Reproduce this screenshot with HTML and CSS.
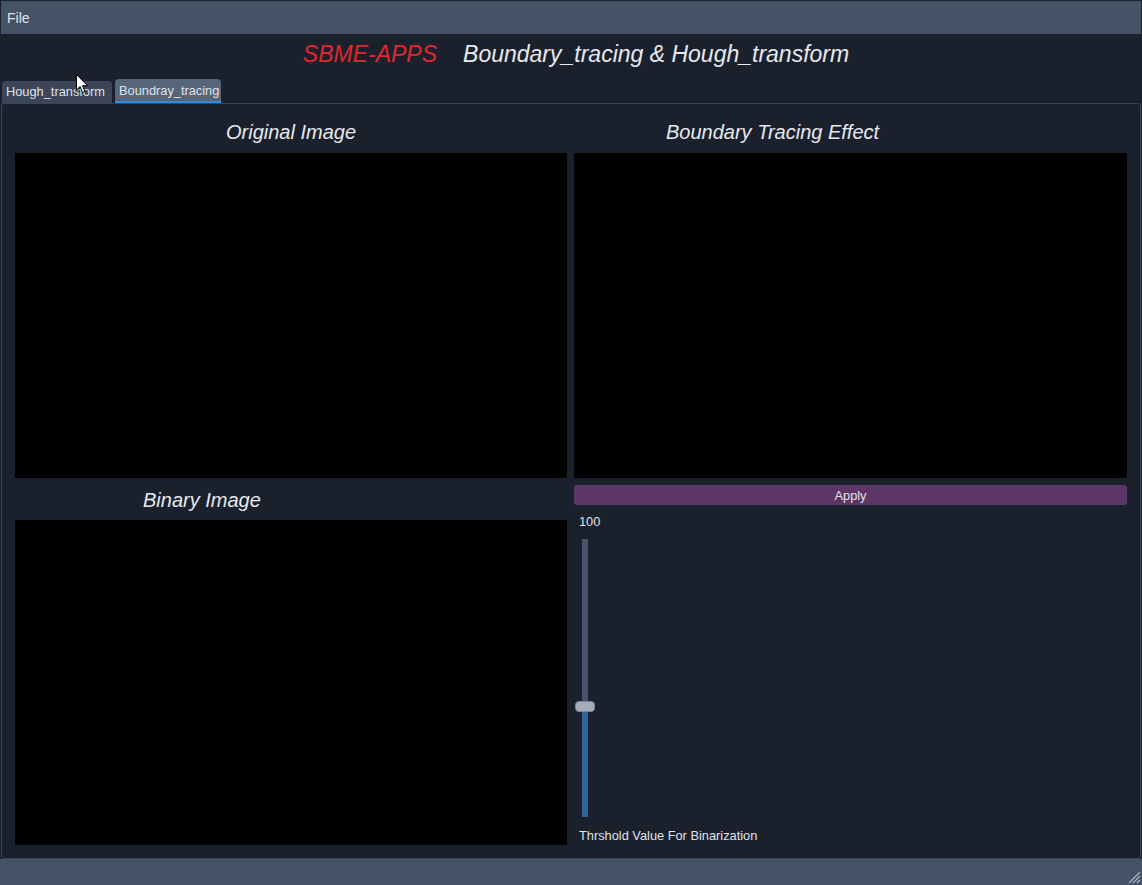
FILE: index.html
```html
<!DOCTYPE html>
<html>
<head>
<meta charset="utf-8">
<link rel="stylesheet" href="styles.css">
</head>
<body>
<div class="window">
  <div class="menubar"><span class="menu-item">File</span></div>
  <div class="title"><span class="brand">SBME-APPS</span><span class="subtitle">Boundary_tracing &amp; Hough_transform</span></div>
  <div class="tabs">
    <div class="tab">Hough_transform</div>
    <div class="tab active">Boundray_tracing</div>
  </div>
  <div class="panel">
    <div class="grid">
      <div class="label label-orig">Original Image</div>
      <div class="label label-effect">Boundary Tracing Effect</div>
      <div class="image"></div>
      <div class="image"></div>
      <div class="label label-binary">Binary Image</div>
      <div class="controls">
        <button class="apply">Apply</button>
        <div class="value">100</div>
        <div class="slider">
          <div class="track-top"></div>
          <div class="track-bottom"></div>
          <div class="handle"></div>
        </div>
        <div class="caption">Thrshold Value For Binarization</div>
      </div>
      <div class="image"></div>
    </div>
  </div>
  <div class="statusbar">
    <svg class="grip" width="14" height="14" viewBox="0 0 14 14">
      <path d="M13 2 L2 13 M13 6 L6 13 M13 10 L10 13" stroke="#a9b3c2" stroke-width="1.2" fill="none"/>
    </svg>
  </div>
  <svg class="cursor" width="13" height="20" viewBox="0 0 13 20">
    <path d="M0.5 0.5 L0.5 16 L4 12.5 L6.6 18.5 L9 17.5 L6.5 11.7 L11.5 11.7 Z" fill="#ffffff" stroke="#000000" stroke-width="1"/>
  </svg>
</div>
</body>
</html>
```
FILE: styles.css
```css
* { box-sizing: border-box; }
html, body { margin: 0; padding: 0; }
body {
  background: #1b212c;
  font-family: "Liberation Sans", Arial, sans-serif;
  color: #dfe3ea;
}
.window {
  position: relative;
  width: 1142px;
  height: 885px;
  display: flex;
  flex-direction: column;
  background: #1b212c;
}
.menubar {
  height: 33px;
  margin: 1px 1px 0 1px;
  background: #465366;
  display: flex;
  align-items: center;
  padding-left: 6px;
}
.menu-item {
  font-size: 14px;
  color: #dfe3ea;
}
.title {
  height: 44px;
  display: flex;
  justify-content: center;
  align-items: center;
  gap: 26px;
  font-style: italic;
  font-size: 23px;
  padding-left: 10px;
  padding-bottom: 4px;
}
.brand { color: #e0262e; }
.subtitle { color: #e6e9ef; }
.tabs {
  height: 25px;
  display: flex;
  align-items: flex-end;
  gap: 3px;
  padding-left: 2px;
}
.tab {
  height: 22px;
  width: 110px;
  background: #3c4658;
  border-radius: 4px 4px 0 0;
  font-size: 12.8px;
  color: #dfe3ea;
  display: flex;
  align-items: center;
  padding-left: 4px;
  padding-bottom: 1px;
}
.tab.active {
  height: 24px;
  width: 106px;
  background: #57657a;
  border-bottom: 2px solid #2b8ee0;
  padding-top: 1px;
  padding-bottom: 0;
}
.panel {
  flex: 1;
  margin: 0 1px;
  border: 1px solid #3b4759;
  border-radius: 3px;
  padding: 0 12px 0 13px;
}
.grid {
  display: grid;
  grid-template-columns: 552px 553px;
  grid-template-rows: 49px 325px 42px 325px;
  column-gap: 7px;
}
.label {
  font-style: italic;
  font-size: 20px;
  color: #e6e9ef;
  display: flex;
  align-items: center;
}
.label-orig { justify-content: center; padding-top: 8px; }
.label-effect { padding-left: 92px; padding-top: 8px; }
.label-binary { padding-left: 128px; padding-top: 2px; }
.image { background: #000000; }
.controls {
  grid-row: 3 / 5;
  grid-column: 2;
  display: flex;
  flex-direction: column;
  padding-top: 7px;
}
.apply {
  height: 20px;
  border: none;
  border-radius: 3px;
  background: #5e3566;
  color: #dfe3ea;
  font-family: "Liberation Sans", Arial, sans-serif;
  font-size: 12.8px;
  padding: 0;
}
.value {
  font-size: 12.8px;
  margin-top: 10px;
  padding-left: 5px;
  line-height: 14px;
}
.slider {
  position: relative;
  margin-top: 10px;
  margin-left: 8px;
  width: 6px;
  height: 278px;
  display: flex;
  flex-direction: column;
}
.track-top { height: 168px; background: #47536a; }
.track-bottom { flex: 1; background: #346497; }
.handle {
  position: absolute;
  left: -7px;
  top: 162px;
  width: 20px;
  height: 11px;
  border-radius: 4px;
  background: #a3acba;
  border: 1px solid #7c8595;
}
.caption {
  font-size: 12.8px;
  margin-top: 12px;
  padding-left: 5px;
  line-height: 14px;
}
.statusbar {
  height: 26px;
  background: #465366;
  position: relative;
}
.grip {
  position: absolute;
  right: 1px;
  bottom: 1px;
}
.cursor {
  position: absolute;
  left: 76px;
  top: 74px;
}
```
